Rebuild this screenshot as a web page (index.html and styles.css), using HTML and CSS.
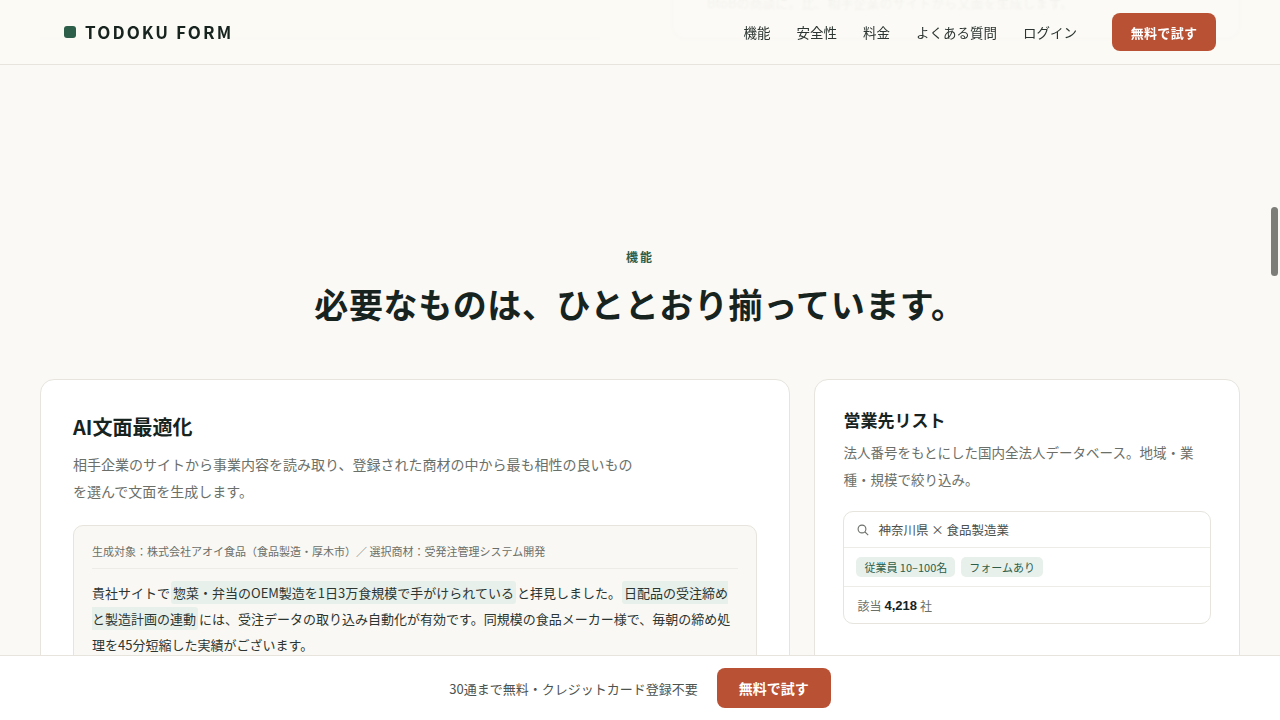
FILE: index.html
```html
<!DOCTYPE html>
<html lang="ja">

<head>
    <meta charset="UTF-8">
    <title>TODOKU FORM</title>
    <link rel="stylesheet" href="styles.css">
</head>

<body>
    <header class="site-header">
        <a class="logo" href="#"><span class="logo-mark"></span>TODOKU FORM</a>
        <nav class="nav">
            <a href="#">機能</a>
            <a href="#">安全性</a>
            <a href="#">料金</a>
            <a href="#">よくある質問</a>
            <a href="#">ログイン</a>
            <a href="#" class="btn btn-nav">無料で試す</a>
        </nav>
    </header>

    <main class="page">
        <!-- previous section, scrolled mostly out of view -->
        <section class="prev">
            <div class="prev-left"></div>
            <div class="prev-card">
                <p>BtoBの商談に。比、相手企業のサイトから文面を生成します。</p>
            </div>
        </section>

        <section class="features">
            <p class="eyebrow">機能</p>
            <h2>必要なものは、ひととおり揃っています。</h2>

            <div class="feature-grid">
                <article class="card card-main">
                    <h3>AI文面最適化</h3>
                    <p class="card-text">相手企業のサイトから事業内容を読み取り、登録された商材の中から最も相性の良いものを選んで文面を生成します。</p>
                    <div class="sample">
                        <p class="sample-meta">生成対象：株式会社アオイ食品（食品製造・厚木市）／ 選択商材：受発注管理システム開発</p>
                        <p class="sample-body">貴社サイトで<mark>惣菜・弁当のOEM製造を1日3万食規模で手がけられている</mark>と拝見しました。<mark>日配品の受注締めと製造計画の連動</mark>には、受注データの取り込み自動化が有効です。同規模の食品メーカー様で、毎朝の締め処理を45分短縮した実績がございます。</p>
                    </div>
                </article>

                <article class="card card-side">
                    <h3>営業先リスト</h3>
                    <p class="card-text">法人番号をもとにした国内全法人データベース。地域・業種・規模で絞り込み。</p>
                    <div class="search-box">
                        <div class="search-row">
                            <svg class="search-icon" viewBox="0 0 12 12" width="12" height="12">
                                <circle cx="5" cy="5" r="3.9"></circle>
                                <path d="M7.9 7.9 L11.2 11.2"></path>
                            </svg>
                            <span>神奈川県 × 食品製造業</span>
                        </div>
                        <div class="tag-row">
                            <span class="tag">従業員 10–100名</span>
                            <span class="tag">フォームあり</span>
                        </div>
                        <div class="count-row">該当 <strong>4,218</strong> 社</div>
                    </div>
                </article>
            </div>
        </section>
    </main>

    <div class="cta-bar">
        <span>30通まで無料・クレジットカード登録不要</span>
        <a href="#" class="btn btn-cta">無料で試す</a>
    </div>

    <div class="scroll-thumb"></div>
</body>

</html>
```

FILE: styles.css
```css
* {
    box-sizing: border-box;
    margin: 0;
    padding: 0;
}

html,
body {
    height: 100%;
    overflow: hidden;
}

body {
    font-family: "Noto Sans CJK JP", "Noto Sans", sans-serif;
    background-color: #faf9f5;
    color: #17231e;
}

a {
    text-decoration: none;
    color: inherit;
}

/* Header */
.site-header {
    position: fixed;
    top: 0;
    left: 0;
    right: 0;
    z-index: 10;
    height: 65px;
    padding: 0 64px;
    display: flex;
    align-items: center;
    justify-content: space-between;
    background-color: rgba(250, 249, 245, 0.88);
    backdrop-filter: blur(1px);
    border-bottom: 1px solid #e6e4dd;
}

.logo {
    display: flex;
    align-items: center;
    gap: 9px;
    padding-bottom: 2px;
    font-size: 17px;
    font-weight: 700;
    letter-spacing: 2.1px;
    color: #17231e;
}

.logo-mark {
    width: 12px;
    height: 12px;
    margin-top: 2px;
    border-radius: 3px;
    background-color: #2d5e4a;
}

.nav {
    display: flex;
    align-items: center;
    gap: 26px;
    font-size: 13.5px;
    color: #2c3531;
}

.btn {
    display: inline-flex;
    align-items: center;
    justify-content: center;
    background-color: #b95135;
    color: #fff;
    font-weight: 700;
}

.btn-nav {
    width: 104px;
    height: 38px;
    margin-left: 9px;
    border-radius: 8px;
    font-size: 13px;
    letter-spacing: 0.3px;
}

/* Page */
.page {
    padding: 0 40px;
}

.prev {
    height: 39px;
    display: grid;
    grid-template-columns: 560px 568px;
    gap: 72px;
}

.prev-left {
    border-bottom: 1px solid #ebe9e2;
}

.prev-card {
    background-color: #fff;
    border: 1px solid #d6d4cc;
    border-top: none;
    border-radius: 0 0 14px 14px;
    padding: 0 34px;
    overflow: hidden;
    font-size: 13px;
    color: #b5b7b2;
    line-height: 14px;
    white-space: nowrap;
}

.prev-card p {
    margin-top: -4px;
}

.features {
    padding-top: 209px;
    text-align: center;
}

.eyebrow {
    font-size: 12px;
    font-weight: 700;
    letter-spacing: 2px;
    line-height: 18px;
    color: #2d5e4a;
}

h2 {
    margin-top: 14px;
    font-size: 34px;
    font-weight: 700;
    letter-spacing: 0.6px;
    line-height: 48px;
    color: #17231e;
}

.feature-grid {
    margin-top: 51px;
    display: grid;
    grid-template-columns: 750.4px 425.6px;
    gap: 24px;
    text-align: left;
}

/* Cards */
.card {
    height: 400px;
    background-color: #fff;
    border: 1px solid #e6e4dd;
    border-radius: 14px;
}

.card-main {
    padding: 32px;
}

.card-side {
    padding: 27px 28px;
}

.card h3 {
    font-weight: 700;
    color: #17231e;
}

.card-main h3 {
    font-size: 20px;
    line-height: 30px;
}

.card-side h3 {
    font-size: 17px;
    line-height: 26px;
}

.card-text {
    font-size: 14px;
    line-height: 27px;
    color: #6b6f69;
}

.card-main .card-text {
    margin-top: 9px;
    max-width: 560px;
}

.card-side .card-text {
    margin-top: 6px;
    font-size: 13.5px;
}

/* Generated sample */
.sample {
    margin-top: 20px;
    padding: 16px 18px;
    background-color: #f9f8f4;
    border: 1px solid #e6e4dd;
    border-radius: 10px;
}

.sample-meta {
    padding-bottom: 8px;
    font-size: 11px;
    line-height: 18px;
    color: #6b6f69;
    border-bottom: 1px solid #eeece6;
}

.sample-body {
    margin-top: 11px;
    font-size: 13px;
    line-height: 26px;
    color: #2c3531;
}

mark {
    background-color: #e8f0eb;
    color: inherit;
    margin: 0 1px;
    padding: 2px;
    border-radius: 3px;
}

/* Search mock */
.search-box {
    margin-top: 18px;
    border: 1px solid #e6e4dd;
    border-radius: 10px;
    font-size: 12px;
}

.search-row {
    height: 35px;
    padding: 0 13px;
    display: flex;
    align-items: center;
    gap: 9px;
    font-size: 12.5px;
    color: #4a504c;
}

.search-icon {
    fill: none;
    stroke: #6b6f69;
    stroke-width: 1.1;
}

.tag-row {
    height: 40px;
    padding: 0 12px;
    display: flex;
    align-items: center;
    gap: 6px;
    border-top: 1px solid #eeece6;
    border-bottom: 1px solid #eeece6;
}

.tag {
    padding: 0 8px;
    height: 20px;
    line-height: 20px;
    font-size: 11px;
    border-radius: 5px;
    background-color: #e8f0eb;
    color: #2d5e4a;
}

.count-row {
    height: 36px;
    padding: 0 13px;
    display: flex;
    align-items: center;
    gap: 3px;
    color: #6b6f69;
}

.count-row strong {
    color: #17231e;
    font-family: "Liberation Sans", sans-serif;
    font-size: 13px;
}

/* Bottom CTA bar */
.cta-bar {
    position: fixed;
    left: 0;
    right: 0;
    bottom: 0;
    z-index: 10;
    height: 65px;
    display: flex;
    align-items: center;
    justify-content: center;
    gap: 19px;
    background-color: #fff;
    border-top: 1px solid #e6e4dd;
    font-size: 13px;
    color: #4d534f;
}

.btn-cta {
    width: 114px;
    height: 40px;
    border-radius: 8px;
    font-size: 14px;
}

/* Overlay scrollbar */
.scroll-thumb {
    position: fixed;
    top: 207px;
    right: 2px;
    z-index: 20;
    width: 7px;
    height: 69px;
    border-radius: 4px;
    background-color: #7c7c78;
}
```
